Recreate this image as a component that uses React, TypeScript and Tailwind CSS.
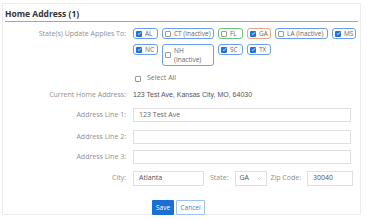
import React from 'react';

type Pill = { code: string; label: string; checked: boolean; tone: 'blue' | 'green' | 'orange'; w: string; wrap?: boolean };

const row1: Pill[] = [
  { code: 'AL', label: 'AL', checked: true, tone: 'blue', w: 'w-[25px]' },
  { code: 'CT', label: 'CT (Inactive)', checked: false, tone: 'blue', w: 'w-[52px]' },
  { code: 'FL', label: 'FL', checked: false, tone: 'green', w: 'w-[25px]' },
  { code: 'GA', label: 'GA', checked: true, tone: 'orange', w: 'w-[24px]' },
  { code: 'LA', label: 'LA (Inactive)', checked: false, tone: 'blue', w: 'w-[53px]' },
  { code: 'MS', label: 'MS', checked: true, tone: 'blue', w: 'w-[24px]' },
];

const row2: Pill[] = [
  { code: 'NC', label: 'NC', checked: true, tone: 'blue', w: 'w-[25px]' },
  { code: 'NH', label: 'NH', checked: false, tone: 'blue', w: 'w-[52px]', wrap: true },
  { code: 'SC', label: 'SC', checked: true, tone: 'blue', w: 'w-[25px]' },
  { code: 'TX', label: 'TX', checked: true, tone: 'blue', w: 'w-[24px]' },
];

const toneClass = {
  blue: 'border-[#6a9ff0]',
  green: 'border-[#6cc37a]',
  orange: 'border-[#f2a27c]',
};

function Check({ checked }: { checked: boolean }) {
  if (checked) {
    return (
      <span className="flex h-[6px] w-[6px] shrink-0 items-center justify-center rounded-[1px] bg-[#1f72d6]">
        <svg viewBox="0 0 8 8" className="h-[5px] w-[5px]">
          <path d="M1.5 4.2 L3.2 5.8 L6.5 2" fill="none" stroke="white" strokeWidth="1.3" />
        </svg>
      </span>
    );
  }
  return <span className="h-[6px] w-[6px] shrink-0 rounded-[1px] border border-[#9a9a9a] bg-white" />;
}

function StatePill({ p }: { p: Pill }) {
  return (
    <div
      className={`${p.w} ${toneClass[p.tone]} flex items-center gap-[3px] rounded-[3px] border-[1.5px] bg-white pl-[2px] ${p.wrap ? 'h-[22px]' : 'h-[11px]'}`}
    >
      <Check checked={p.checked} />
      {p.wrap ? (
        <span className="text-[6.5px] leading-[9px] text-[#666]">
          NH
          <br />
          (Inactive)
        </span>
      ) : (
        <span className="whitespace-nowrap text-[6.5px] leading-[8px] text-[#666]">{p.label}</span>
      )}
    </div>
  );
}

function Label({ children }: { children: React.ReactNode }) {
  return <div className="w-[122px] shrink-0 pr-[1px] text-right text-[7px] text-[#8f8f8f]">{children}</div>;
}

function TextBox({ value, w }: { value: string; w: string }) {
  return (
    <div className={`${w} flex h-[14px] items-center border border-[#e0e0e0] bg-white pl-[5px] text-[7px] text-[#666]`}>
      {value}
    </div>
  );
}

export default function App() {
  return (
    <div className="h-[220px] w-[366px] bg-white pl-[2px] pt-[3px]" style={{ fontFamily: '"Open Sans", sans-serif' }}>
      <div className="h-[212px] w-[359px] border border-[#ececec] px-[2px]">
        <div className="border-b-[1.5px] border-[#85acdf] pb-[1px] pt-[4px] text-[8.5px] font-bold leading-[12px] text-[#333]">
          Home Address (1)
        </div>

        <div className="mt-[6px] flex gap-x-[6px]">
          <Label>
            <div className="leading-[11px]">State(s) Update Applies To:</div>
          </Label>
          <div className="flex flex-col gap-y-[5px]">
            <div className="flex items-start gap-x-[4px]">
              {row1.map((p) => (
                <StatePill key={p.code} p={p} />
              ))}
            </div>
            <div className="flex items-start gap-x-[4px]">
              {row2.map((p) => (
                <StatePill key={p.code} p={p} />
              ))}
            </div>
          </div>
        </div>

        <div className="ml-[130px] mt-[8px] flex h-[9px] items-center gap-[6px]">
          <Check checked={false} />
          <span className="text-[7px] text-[#777]">Select All</span>
        </div>

        <div className="mt-[7px] flex h-[10px] items-center gap-x-[6px]">
          <Label>Current Home Address:</Label>
          <span className="text-[7px] text-[#555]" style={{ fontFamily: '"Liberation Sans", Arial, sans-serif' }}>
            123 Test Ave, Kansas City, MO, 64030
          </span>
        </div>

        <div className="mt-[8px] flex items-center gap-x-[6px]">
          <Label>Address Line 1:</Label>
          <TextBox value="123 Test Ave" w="w-[218px]" />
        </div>
        <div className="mt-[8px] flex items-center gap-x-[6px]">
          <Label>Address Line 2:</Label>
          <TextBox value="" w="w-[218px]" />
        </div>
        <div className="mt-[6px] flex items-center gap-x-[6px]">
          <Label>Address Line 3:</Label>
          <TextBox value="" w="w-[218px]" />
        </div>

        <div className="mt-[7px] flex h-[15px] items-center">
          <div className="mr-[6px]">
            <Label>City:</Label>
          </div>
          <div className="flex h-[15px] w-[71px] items-center border border-[#e0e0e0] pl-[5px] text-[7px] text-[#555]">Atlanta</div>
          <span className="ml-[6px] text-[7px] text-[#8f8f8f]">State:</span>
          <div className="ml-[6px] flex h-[15px] w-[32px] items-center justify-between border border-[#e0e0e0] pl-[4px] pr-[4px] text-[7px] text-[#555]">
            <span>GA</span>
            <svg viewBox="0 0 8 8" className="h-[5px] w-[5px]">
              <path d="M1 2.5 L4 5.5 L7 2.5" fill="none" stroke="#aaa" strokeWidth="0.9" />
            </svg>
          </div>
          <span className="ml-[4px] text-[7px] text-[#8f8f8f]">Zip Code:</span>
          <div className="ml-[6px] flex h-[15px] w-[46px] items-center border border-[#e0e0e0] pl-[5px] text-[7px] text-[#555]">30040</div>
        </div>

        <div className="ml-[147px] mt-[14px] flex gap-[2px]">
          <button className="h-[15px] w-[22px] rounded-[1px] bg-[#1a6fd3] text-[6.5px] text-white">Save</button>
          <button className="h-[15px] w-[29px] rounded-[1px] border border-[#9cc2ee] bg-white text-[6.5px] text-[#3f7fcf]">Cancel</button>
        </div>
      </div>
    </div>
  );
}
